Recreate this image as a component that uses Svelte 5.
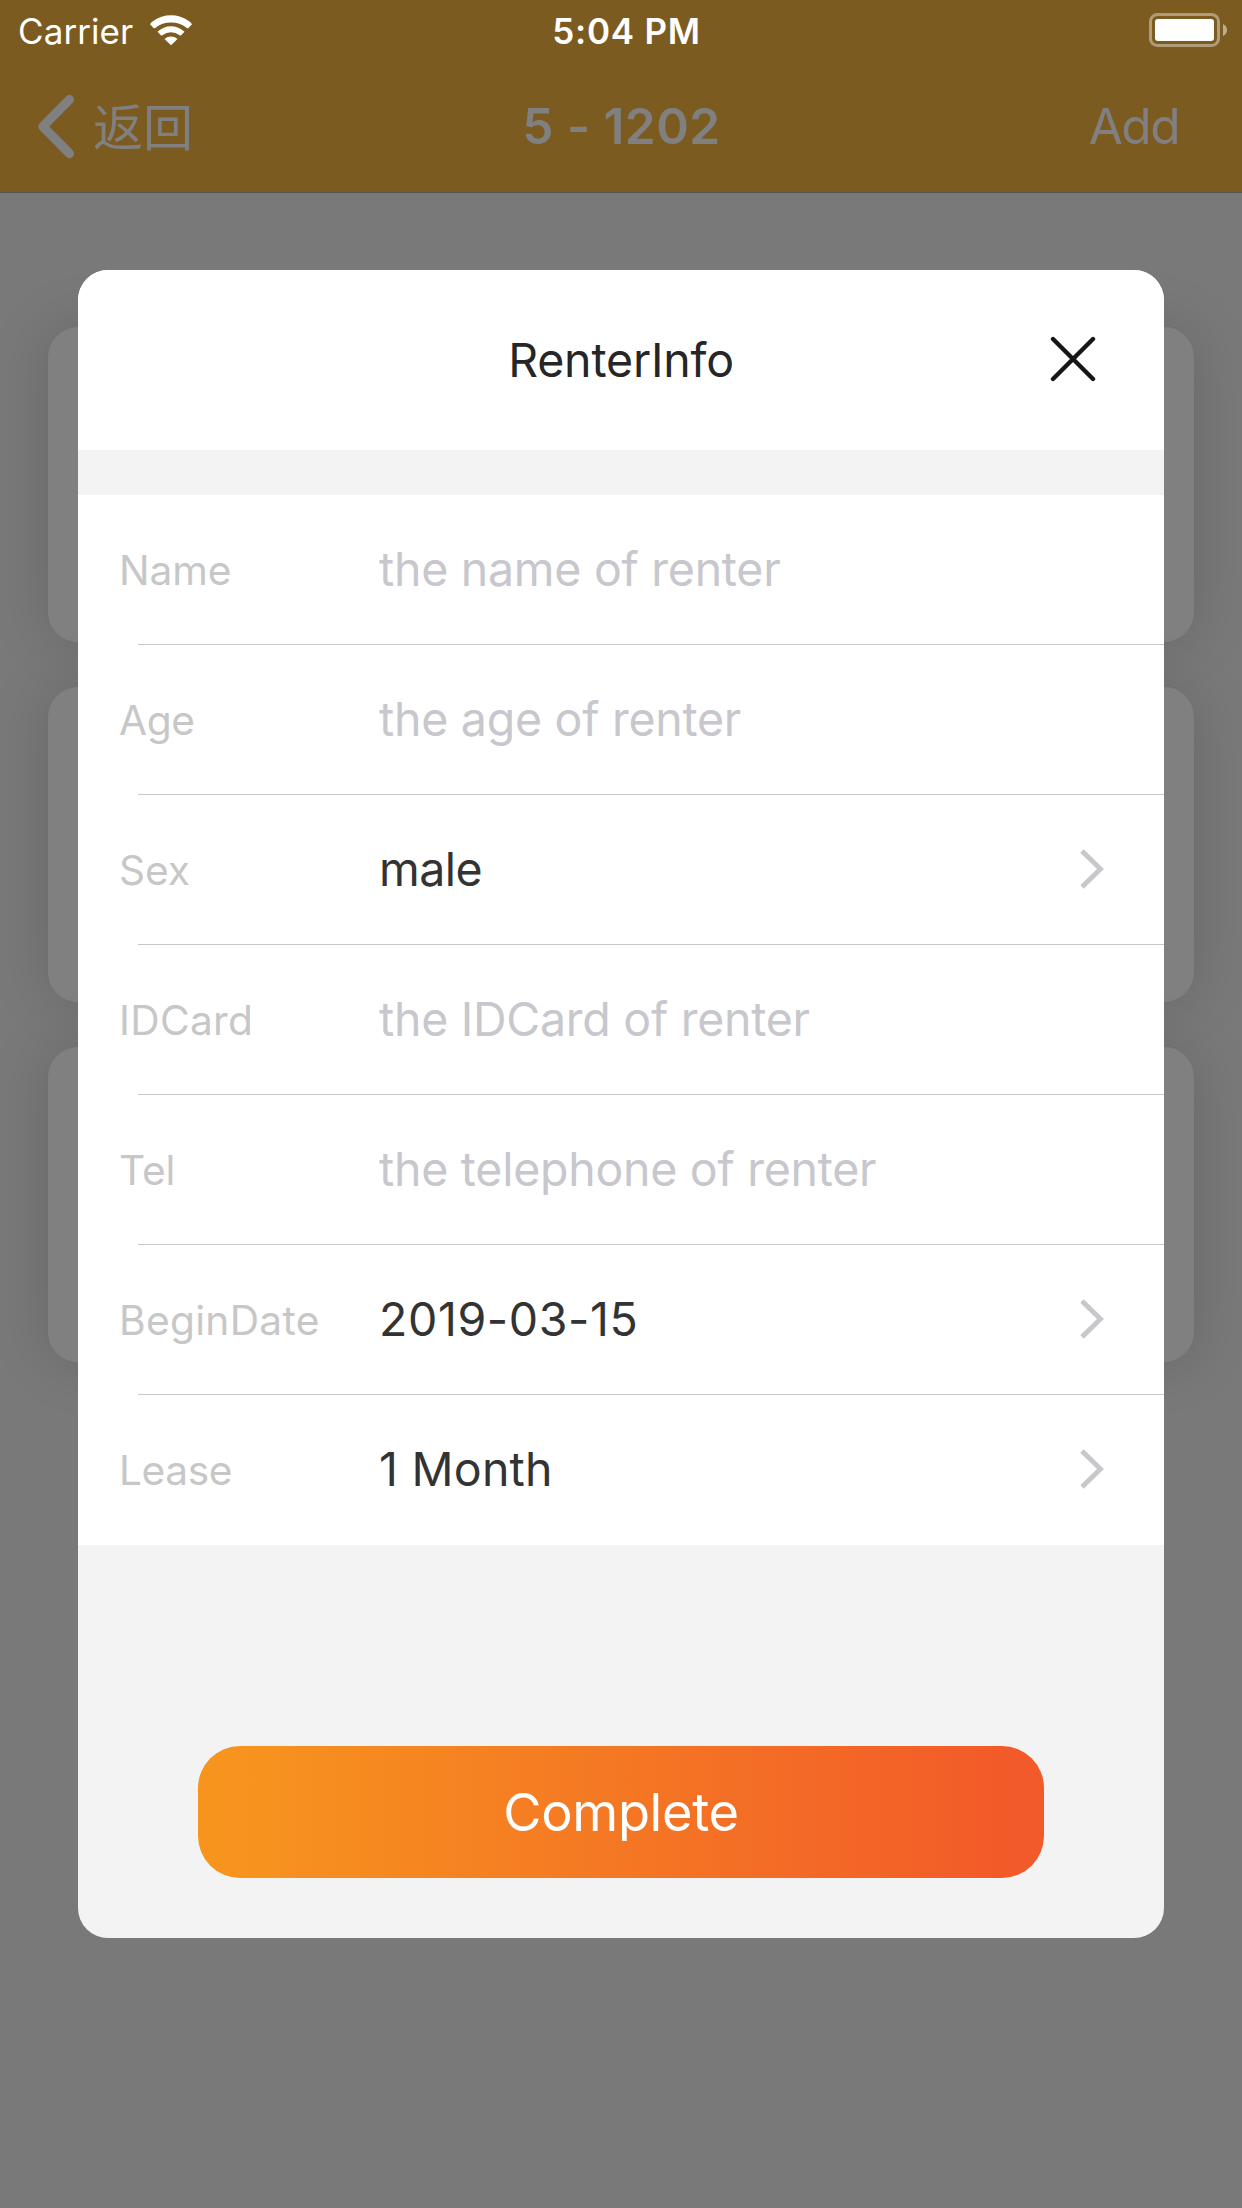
<script>
  const rooms = [1, 2, 3];

  const fields = [
    { label: 'Name', text: 'the name of renter', kind: 'hint' },
    { label: 'Age', text: 'the age of renter', kind: 'hint', fit: 'snug' },
    { label: 'Sex', text: 'male', kind: 'word', picker: true },
    { label: 'IDCard', text: 'the IDCard of renter', kind: 'hint', fit: 'loose' },
    { label: 'Tel', text: 'the telephone of renter', kind: 'hint' },
    { label: 'BeginDate', text: '2019-03-15', kind: 'figure', picker: true, fit: 'loose' },
    { label: 'Lease', text: '1 Month', kind: 'month', picker: true, fit: 'snug' }
  ];
</script>

<div class="screen">
  <div class="page">
    <header class="top">
      <div class="status">
        <div class="carrier">
          <span>Carrier</span>
          <svg class="wifi" viewBox="0 0 42 30" aria-hidden="true">
            <path d="M0 9.2Q1 7.6 3.2 6A30 30 0 0 1 38.8 6Q41 7.6 42 9.2L38.2 13.2Q37.4 13.4 36.8 12.9A25.5 25.5 0 0 0 5.2 12.9Q4.6 13.4 3.8 13.2Z" />
            <path d="M7.5 16.7A19.6 19.6 0 0 1 34.5 16.7L30.8 20.5Q30.2 20.7 29.6 20.2A14 14 0 0 0 12.4 20.2Q11.8 20.7 11.2 20.5Z" />
            <path d="M14.5 23.9A10.3 10.3 0 0 1 27.5 23.9L21.5 29.8Q21 30.2 20.5 29.8Z" />
          </svg>
        </div>
        <span class="clock">5:04 PM</span>
        <svg class="battery" viewBox="0 0 78 34" aria-hidden="true">
          <rect x="1.5" y="1.5" width="68" height="31" rx="7" />
          <rect class="charge" x="6" y="6" width="59" height="22" rx="3" />
          <path d="M74 11Q78 13 78 17T74 23Z" />
        </svg>
      </div>
      <nav class="bar">
        <div class="back">
          <svg viewBox="0 0 36 63" aria-hidden="true"><path d="M31.5 4.5L4.8 31.5L31.5 58.5" /></svg>
          <span>返回</span>
        </div>
        <span class="title">5 - 1202</span>
        <span class="add">Add</span>
      </nav>
    </header>
    <div class="rooms">
      {#each rooms as room (room)}
        <div class="room"></div>
      {/each}
    </div>
  </div>

  <section class="dialog">
    <div class="heading">
      <h1>RenterInfo</h1>
      <svg class="close" viewBox="0 0 46 46" aria-hidden="true"><path d="M3 3L43 43M43 3L3 43" /></svg>
    </div>
    <div class="form">
      {#each fields as field (field.label)}
        <div class="field">
          <span class="label {field.fit ?? ''}">{field.label}</span>
          <span class="value {field.kind}">{field.text}</span>
          {#if field.picker}
            <svg class="chevron" viewBox="0 0 24 40" aria-hidden="true"><path d="M2 2L20.5 20L2 38" /></svg>
          {/if}
        </div>
      {/each}
    </div>
    <button class="complete">Complete</button>
  </section>
</div>

<style>
  :global(body) {
    margin: 0;
  }

  .screen {
    display: grid;
    grid-template: 2208px / 1242px;
    justify-items: center;
    align-items: start;
    overflow: hidden;
    font-family: Inter, 'Noto Sans CJK SC', sans-serif;
  }

  .page,
  .dialog {
    grid-area: 1 / 1;
  }

  .page {
    width: 100%;
    height: 100%;
    background: #797979;
  }

  .top {
    background: #7c5b20;
    border-bottom: 1px solid #555;
    position: relative;
    z-index: 1;
  }

  .status {
    display: grid;
    grid-template-columns: 1fr auto 1fr;
    align-items: center;
    height: 60px;
    box-sizing: border-box;
    padding: 2px 15px 0 18px;
    color: #fff;
    font-size: 35px;
    line-height: 58px;
  }

  .carrier {
    display: flex;
    align-items: center;
    gap: 17px;
    letter-spacing: 0.08px;
  }

  .wifi {
    width: 42px;
    height: 30px;
    margin-top: -2px;
    fill: #fff;
  }

  .clock {
    font-weight: 600;
    letter-spacing: 0.75px;
    margin-left: 8px;
  }

  .battery {
    width: 78px;
    height: 34px;
    margin-top: -2px;
    justify-self: end;
    fill: rgba(255, 255, 255, 0.5);
  }

  .battery rect {
    fill: none;
    stroke: rgba(255, 255, 255, 0.4);
    stroke-width: 3;
  }

  .battery .charge {
    fill: #fff;
    stroke: none;
  }

  .bar {
    display: grid;
    grid-template-columns: 1fr auto 1fr;
    align-items: center;
    height: 132px;
    padding: 0 63px 0 38px;
    color: #808080;
    font-size: 49.5px;
    line-height: 60px;
  }

  .back {
    display: flex;
    align-items: center;
    gap: 19px;
    font-family: 'Noto Sans CJK SC', sans-serif;
    font-size: 50px;
  }

  .back span {
    margin-top: -5px;
  }

  .back svg {
    width: 36px;
    height: 63px;
    fill: none;
    stroke: #808080;
    stroke-width: 9;
    stroke-linecap: round;
    stroke-linejoin: round;
  }

  .title {
    font-weight: 600;
    letter-spacing: 0.5px;
    margin-left: 26px;
  }

  .add {
    justify-self: end;
    letter-spacing: -1.5px;
  }

  .rooms {
    display: flex;
    flex-direction: column;
    gap: 45px;
    padding: 134px 48px 0;
  }

  .room {
    height: 315px;
    border-radius: 30px;
    background: #808080;
    box-shadow: 0 0 60px rgba(0, 0, 0, 0.15);
  }

  .dialog {
    display: flex;
    flex-direction: column;
    width: 1086px;
    height: 1668px;
    margin-top: 270px;
    border-radius: 30px;
    overflow: hidden;
    background: #f3f3f3;
    z-index: 2;
  }

  .heading {
    display: grid;
    grid-template-columns: 1fr auto 1fr;
    align-items: center;
    height: 180px;
    box-sizing: border-box;
    padding: 0 68px;
    background: #fff;
  }

  h1 {
    grid-column: 2;
    margin: 0;
    font-size: 46.5px;
    line-height: 60px;
    font-weight: 400;
    letter-spacing: -0.19px;
    color: #262626;
  }

  .close {
    justify-self: end;
    width: 46px;
    height: 46px;
    margin-top: -2px;
    fill: none;
    stroke: #161616;
    stroke-width: 4.4;
    stroke-linecap: round;
  }

  .form {
    margin-top: 45px;
    background: #fff;
  }

  .field {
    display: grid;
    grid-template-columns: 260px 1fr auto;
    align-items: center;
    height: 150px;
    box-sizing: border-box;
    padding: 0 60px 0 41px;
    line-height: 60px;
    background: linear-gradient(#c8c7cc, #c8c7cc) 60px 100% / 100% 1px no-repeat;
  }

  .field:last-child {
    background: none;
  }

  .label {
    margin-top: 2px;
    font-size: 40.7px;
    letter-spacing: -0.1px;
    color: #c7c7c7;
  }

  .label.snug {
    letter-spacing: -0.4px;
  }

  .label.loose {
    letter-spacing: 0.3px;
  }

  .value {
    margin-top: -2px;
    font-size: 46.5px;
    letter-spacing: -0.5px;
    color: #333;
  }

  .value.hint {
    letter-spacing: -0.27px;
    color: #c7c7cd;
  }

  .value.figure {
    letter-spacing: 0.6px;
  }

  .value.month {
    letter-spacing: 0.25px;
  }

  .chevron {
    width: 24px;
    height: 40px;
    margin-top: -3px;
    fill: none;
    stroke: #c7c7cc;
    stroke-width: 5;
  }

  .complete {
    align-self: center;
    width: 846px;
    height: 132px;
    margin: 201px 0 0;
    padding: 0;
    border: 0;
    border-radius: 42px;
    background: linear-gradient(90deg, #f7941e 4%, #f25a29 96%);
    color: #fff;
    font: 400 52.4px / 132px Inter, sans-serif;
    letter-spacing: -0.35px;
  }
</style>
